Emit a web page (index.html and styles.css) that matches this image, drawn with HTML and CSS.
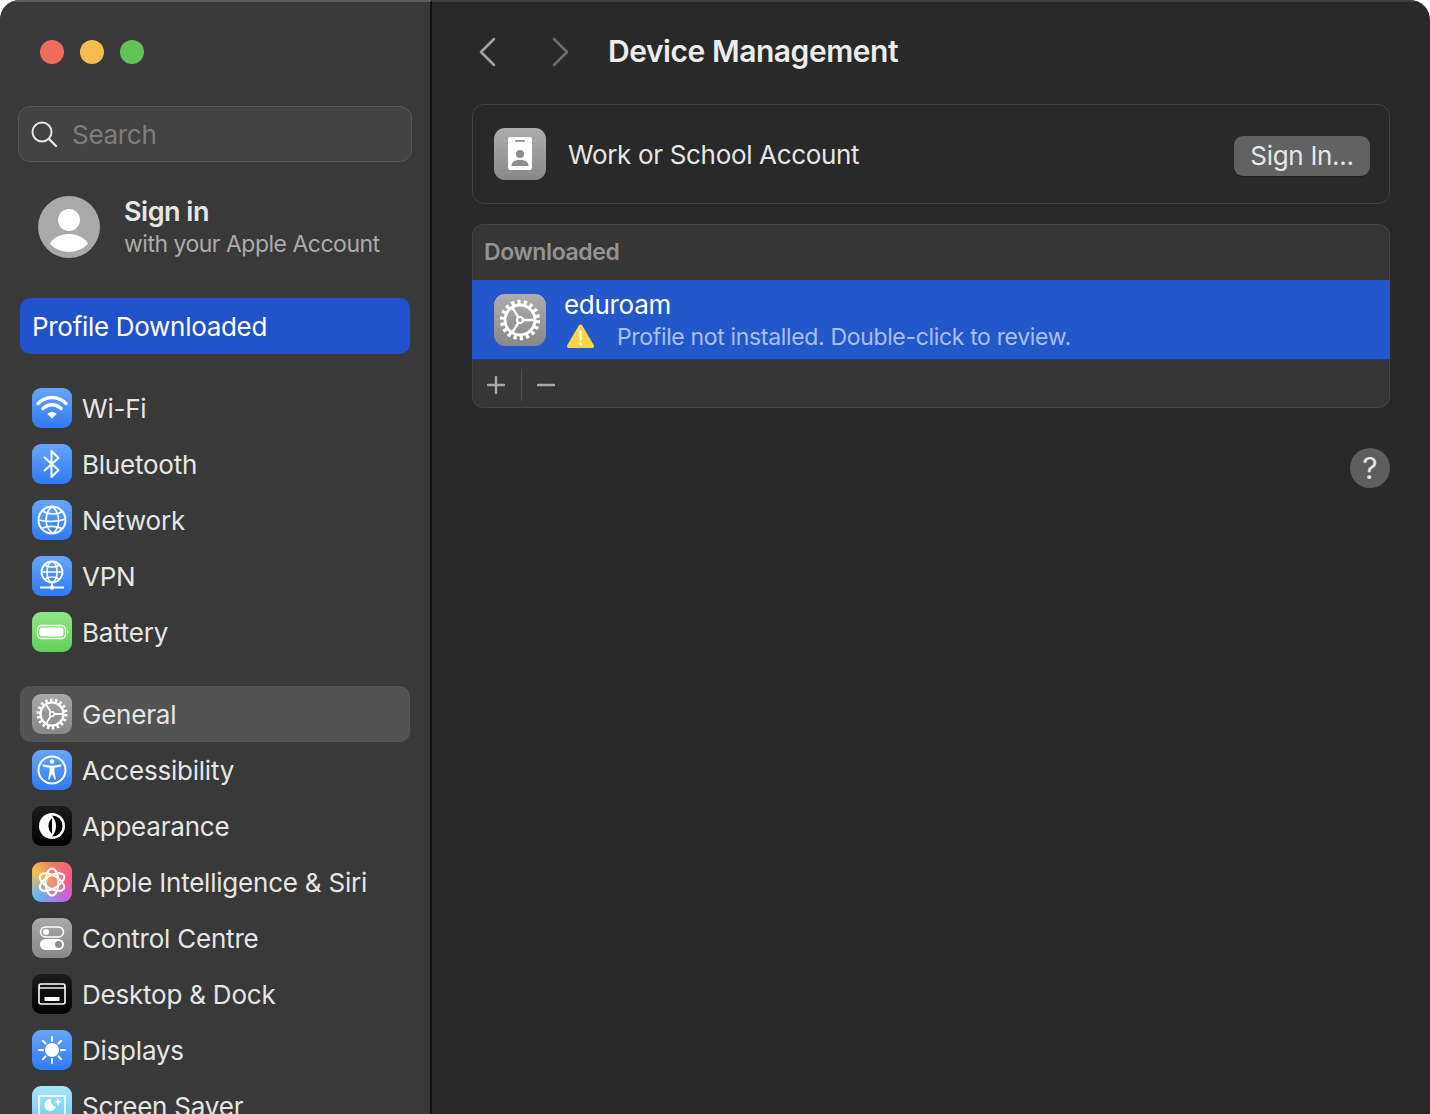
FILE: index.html
```html
<!DOCTYPE html>
<html>
<head>
    <title>Device Management</title>
    <link rel="stylesheet" href="styles.css">
</head>
<body>
    <svg class="defs" width="0" height="0">
        <symbol id="gear" viewBox="0 0 40 40">
            <circle cx="20" cy="20" r="13.800" fill="none" stroke="#fff" stroke-width="3.400" stroke-dasharray="2.410 2.410"/>
            <circle cx="20" cy="20" r="11.500" fill="none" stroke="#fff" stroke-width="2.200"/>
            <circle cx="20" cy="20" r="2.300" fill="none" stroke="#fff" stroke-width="1.500"/>
            <path d="M22 20H32M18.800 18L13.500 9.500M18.800 22L13.500 30.500" fill="none" stroke="#fff" stroke-width="1.800"/>
        </symbol>
    </svg>

    <div class="window">
        <aside class="sidebar">
            <div class="lights">
                <span class="light red"></span>
                <span class="light yellow"></span>
                <span class="light green"></span>
            </div>

            <div class="search">
                <svg class="search-icon" width="28" height="28" viewBox="0 0 28 28">
                    <circle cx="12" cy="12" r="9.500" fill="none" stroke="#e4e4e4" stroke-width="2"/>
                    <path d="M19 19L26 26" stroke="#e4e4e4" stroke-width="2.400" stroke-linecap="round"/>
                </svg>
                <span>Search</span>
            </div>

            <div class="account">
                <svg width="62" height="62" viewBox="0 0 62 62">
                    <defs><clipPath id="avatar-clip"><circle cx="31" cy="30" r="26"/></clipPath></defs>
                    <circle cx="31" cy="31" r="31" fill="#a9a9a9"/>
                    <circle cx="31" cy="24" r="11" fill="#fff"/>
                    <ellipse cx="31" cy="54" rx="21" ry="16" fill="#fff" clip-path="url(#avatar-clip)"/>
                </svg>
                <div class="account-text">
                    <div class="account-name">Sign in</div>
                    <div class="account-sub">with your Apple Account</div>
                </div>
            </div>

            <div class="profile-pill">Profile Downloaded</div>

            <ul class="nav nav-first">
                <li class="nav-row">
                    <span class="icon blue">
                        <svg viewBox="0 0 40 40" fill="none" stroke="#fff" stroke-linecap="round">
                            <path d="M6 15.500C14 7.500 26 7.500 34 15.500" stroke-width="3.400"/>
                            <path d="M11 20.500C16.500 15.500 23.500 15.500 29 20.500" stroke-width="3.400"/>
                            <path d="M16.500 26L20 29.500L23.500 26C21.500 24.300 18.500 24.300 16.500 26Z" fill="#fff" stroke-width="1.500"/>
                        </svg>
                    </span>
                    Wi-Fi
                </li>
                <li class="nav-row">
                    <span class="icon blue">
                        <svg viewBox="0 0 40 40" fill="none" stroke="#fff" stroke-width="2" stroke-linejoin="round" stroke-linecap="round">
                            <path d="M12.500 13.500L26.500 26L19.500 33V7L26.500 14L12.500 26.500"/>
                        </svg>
                    </span>
                    Bluetooth
                </li>
                <li class="nav-row">
                    <span class="icon blue">
                        <svg viewBox="0 0 40 40" fill="none" stroke="#fff" stroke-width="1.700">
                            <circle cx="20" cy="20" r="13.500" stroke-width="2"/>
                            <path d="M20 6.500C13 12 11 27 21 33.500M20 6.500C28 12 29 27 21 33.500"/>
                            <path d="M10 10.500C16 15 25 15 30.500 11.500M6.500 20C14 22 26 22 33.500 19M9.500 28.500C15 25.500 25 25.500 31 29"/>
                        </svg>
                    </span>
                    Network
                </li>
                <li class="nav-row">
                    <span class="icon blue">
                        <svg viewBox="0 0 40 40" fill="none" stroke="#fff" stroke-width="1.500">
                            <circle cx="20" cy="16" r="10.500" stroke-width="1.800"/>
                            <ellipse cx="20" cy="16" rx="5" ry="10.500"/>
                            <path d="M12.500 9C17 11.500 23 11.500 27.500 9M9.500 16H30.500M12.500 23C17 20.500 23 20.500 27.500 23"/>
                            <path d="M20 26.500V31M8 31.500H32" stroke-width="1.800"/>
                            <circle cx="20" cy="31.500" r="2.200" fill="#fff" stroke="none"/>
                        </svg>
                    </span>
                    VPN
                </li>
                <li class="nav-row">
                    <span class="icon green-tile">
                        <svg viewBox="0 0 40 40">
                            <rect x="5.500" y="13.500" width="28" height="13" rx="4" fill="none" stroke="#fff" stroke-width="1.400"/>
                            <rect x="7.500" y="15.500" width="24" height="9" rx="2.500" fill="#fff"/>
                            <path d="M35 18V22C36.200 21.500 36.200 18.500 35 18Z" fill="#fff"/>
                        </svg>
                    </span>
                    Battery
                </li>
            </ul>

            <ul class="nav">
                <li class="nav-row selected">
                    <span class="icon grey">
                        <svg viewBox="0 0 40 40"><use href="#gear"/></svg>
                    </span>
                    General
                </li>
                <li class="nav-row">
                    <span class="icon blue">
                        <svg viewBox="0 0 40 40" fill="none" stroke="#fff">
                            <circle cx="20" cy="20" r="13.500" stroke-width="2"/>
                            <circle cx="20" cy="11.500" r="2.200" fill="#fff" stroke="none"/>
                            <path d="M11.500 15.500C16 17 24 17 28.500 15.500" stroke-width="2" stroke-linecap="round"/>
                            <path d="M17.500 17H22.500V22L24 29.500H22.500L20 23.500L17.500 29.500H16L17.500 22Z" fill="#fff" stroke="none"/>
                        </svg>
                    </span>
                    Accessibility
                </li>
                <li class="nav-row">
                    <span class="icon black">
                        <svg viewBox="0 0 40 40">
                            <circle cx="20" cy="20" r="13" fill="#fff"/>
                            <path d="M20 9.500A10.500 10.500 0 0 1 20 30.500C23 27 24 23.500 24 20C24 16.500 23 13 20 9.500Z" fill="#000"/>
                            <path d="M20 12C17.500 14.500 16.500 17 16.500 20C16.500 23 17.500 25.500 20 28Z" fill="#000"/>
                        </svg>
                    </span>
                    Appearance
                </li>
                <li class="nav-row">
                    <span class="icon siri">
                        <svg viewBox="0 0 40 40" fill="none" stroke="#fff" stroke-width="2">
                            <ellipse cx="20" cy="20" rx="6.500" ry="13.500"/>
                            <ellipse cx="20" cy="20" rx="6.500" ry="13.500" transform="rotate(60 20 20)"/>
                            <ellipse cx="20" cy="20" rx="6.500" ry="13.500" transform="rotate(120 20 20)"/>
                        </svg>
                    </span>
                    Apple Intelligence &amp; Siri
                </li>
                <li class="nav-row">
                    <span class="icon grey">
                        <svg viewBox="0 0 40 40">
                            <rect x="8.500" y="9" width="23" height="10" rx="5" fill="none" stroke="#fff" stroke-width="1.500"/>
                            <circle cx="14" cy="14" r="3" fill="#fff"/>
                            <rect x="8" y="21" width="24" height="11" rx="5.500" fill="#fff"/>
                            <circle cx="26.500" cy="26.500" r="3.500" fill="#8d8d90"/>
                        </svg>
                    </span>
                    Control Centre
                </li>
                <li class="nav-row">
                    <span class="icon black">
                        <svg viewBox="0 0 40 40" fill="none" stroke="#fff">
                            <rect x="7" y="10" width="26" height="20" rx="2" stroke-width="1.600"/>
                            <path d="M7 14H33" stroke-width="1.400"/>
                            <rect x="12.500" y="23" width="15" height="4" fill="#fff" stroke="none"/>
                        </svg>
                    </span>
                    Desktop &amp; Dock
                </li>
                <li class="nav-row">
                    <span class="icon blue">
                        <svg viewBox="0 0 40 40">
                            <circle cx="20" cy="20" r="7" fill="#fff"/>
                            <path d="M20 7V11M20 29V33M7 20H11M29 20H33M10.800 10.800L13.600 13.600M26.400 26.400L29.200 29.200M10.800 29.200L13.600 26.400M26.400 13.600L29.200 10.800" stroke="#fff" stroke-width="2" stroke-linecap="round"/>
                        </svg>
                    </span>
                    Displays
                </li>
                <li class="nav-row">
                    <span class="icon sky">
                        <svg viewBox="0 0 40 40">
                            <rect x="7" y="10" width="26" height="20" fill="none" stroke="#fff" stroke-width="1.600"/>
                            <path d="M19 13A6 6 0 1 0 24 21A6.500 6.500 0 0 1 19 13Z" fill="#fff"/>
                            <path d="M26 12L27 15L30 16L27 17L26 20L25 17L22 16L25 15Z" fill="#fff"/>
                        </svg>
                    </span>
                    Screen Saver
                </li>
            </ul>
        </aside>

        <main class="content">
            <header class="toolbar">
                <svg class="chevron" width="18" height="30" viewBox="0 0 18 30" fill="none" stroke="#a2a2a2" stroke-width="2.600" stroke-linecap="round" stroke-linejoin="round">
                    <path d="M16 2L3 15L16 28"/>
                </svg>
                <svg class="chevron chevron-next" width="18" height="30" viewBox="0 0 18 30" fill="none" stroke="#6c6c6c" stroke-width="2.600" stroke-linecap="round" stroke-linejoin="round">
                    <path d="M2 2L15 15L2 28"/>
                </svg>
                <h1>Device Management</h1>
            </header>

            <section class="card account-card">
                <span class="tile">
                    <svg viewBox="0 0 52 52">
                        <rect x="14" y="9" width="24" height="33" rx="2" fill="#fff"/>
                        <rect x="21" y="12" width="10" height="1.800" rx="0.900" fill="#8e8e91"/>
                        <circle cx="26" cy="26" r="4" fill="#8e8e91"/>
                        <path d="M17.500 38C17.500 33.500 21 32 26 32C31 32 34.500 33.500 34.500 38Z" fill="#8e8e91"/>
                    </svg>
                </span>
                <span class="card-label">Work or School Account</span>
                <span class="button">Sign In...</span>
            </section>

            <section class="card list-card">
                <div class="list-head">Downloaded</div>
                <div class="list-row">
                    <span class="tile">
                        <svg viewBox="0 0 40 40"><use href="#gear"/></svg>
                    </span>
                    <div class="list-text">
                        <div class="list-title">eduroam</div>
                        <div class="list-status">
                            <svg width="30" height="30" viewBox="0 0 30 30">
                                <path d="M16.500 4.500L28 24H5Z" fill="#fdd645" stroke="#fdd645" stroke-width="4" stroke-linejoin="round"/>
                                <path d="M16.500 9.500V17.500" stroke="#fff" stroke-width="2.400" stroke-linecap="round"/>
                                <circle cx="16.500" cy="21.800" r="1.500" fill="#fff"/>
                            </svg>
                            <span>Profile not installed. Double-click to review.</span>
                        </div>
                    </div>
                </div>
                <div class="list-foot">
                    <svg class="foot-btn" width="18" height="18" viewBox="0 0 18 18">
                        <path d="M9 1V17M1 9H17" stroke="#a9a9a9" stroke-width="2.400" stroke-linecap="round"/>
                    </svg>
                    <span class="foot-divider"></span>
                    <svg class="foot-btn" width="18" height="18" viewBox="0 0 18 18">
                        <path d="M1 9H17" stroke="#a9a9a9" stroke-width="2.400" stroke-linecap="round"/>
                    </svg>
                </div>
            </section>

            <div class="help-row">
                <span class="help">?</span>
            </div>
        </main>
    </div>
</body>
</html>
```

FILE: styles.css
```css
* {
    box-sizing: border-box;
}
html, body {
    margin: 0;
    height: 100%;
    background: #fff;
}
body {
    font-family: Inter, "Liberation Sans", sans-serif;
    overflow: hidden;
}
.defs {
    position: absolute;
}
.window {
    display: flex;
    width: 1430px;
    height: 1114px;
    border-radius: 20px 20px 0 0;
    overflow: hidden;
    background: #292929;
    color: #e6e6e6;
}

/* sidebar */
.sidebar {
    width: 432px;
    flex: none;
    padding: 0 18px;
    background: #393939;
    border-right: 2px solid #111;
    border-top: 2px solid #5c5c5c;
}
.lights {
    display: flex;
    gap: 16px;
    padding: 38px 0 0 22px;
}
.light {
    width: 24px;
    height: 24px;
    border-radius: 50%;
}
.red { background: #ee6a5f; }
.yellow { background: #f5bd4f; }
.green { background: #61c454; }

.search {
    display: flex;
    align-items: center;
    height: 56px;
    margin-top: 42px;
    padding-left: 11px;
    background: #434343;
    border: 1px solid #585858;
    border-radius: 12px;
    font-size: 26px;
    letter-spacing: -0.3px;
    color: #7e7e7e;
}
.search-icon {
    margin-right: 14px;
}
.account {
    display: flex;
    align-items: center;
    gap: 24px;
    margin-top: 33px;
    padding-left: 20px;
}
.account svg {
    display: block;
}
.account-name {
    font-size: 27px;
    font-weight: 600;
    line-height: 34px;
    letter-spacing: -0.5px;
}
.account-sub {
    font-size: 23px;
    line-height: 30px;
    letter-spacing: -0.5px;
    color: #ababab;
}
.profile-pill {
    display: flex;
    align-items: center;
    height: 56px;
    margin: 39px 2px 0;
    padding-left: 12px;
    background: #2052cc;
    border-radius: 10px;
    font-size: 26px;
    letter-spacing: -0.3px;
    color: #fff;
}
.nav {
    list-style: none;
    margin: 26px 2px 0;
    padding: 0;
}
.nav-row {
    display: flex;
    align-items: center;
    gap: 10px;
    height: 56px;
    padding-left: 12px;
    border-radius: 10px;
    font-size: 26px;
    letter-spacing: -0.22px;
}
.selected {
    background: #535353;
}
.icon {
    flex: none;
    width: 40px;
    height: 40px;
    border-radius: 9px;
}
.icon svg {
    display: block;
    width: 40px;
    height: 40px;
}
.blue { background: linear-gradient(#66a5fb, #2f7bf6); }
.green-tile { background: linear-gradient(#93e68b, #5fd155); }
.grey { background: linear-gradient(#a9a9ac, #88888b); }
.black { background: linear-gradient(#1c1c1c, #000); }
.sky { background: linear-gradient(#a6e8fb, #6ec6ef); }
.siri {
    background:
        radial-gradient(circle at 50% 50%, #f59a63 0, rgba(245, 154, 99, 0) 60%),
        conic-gradient(#ef7a5f, #f0558f 90deg, #b96ae8 150deg, #63b6f2 225deg, #f3c14a 300deg, #ef7a5f);
}

/* main pane */
.content {
    flex: 1;
    min-width: 0;
    padding: 0 40px;
    border-top: 2px solid #3e3e3e;
}
.toolbar {
    display: flex;
    align-items: center;
    height: 102px;
    padding: 0 0 3px 6px;
}
.chevron-next {
    margin-left: 56px;
}
.toolbar h1 {
    margin: 0 0 2px 38px;
    font-size: 30px;
    font-weight: 600;
    line-height: 36px;
    letter-spacing: -0.45px;
    color: #ececec;
}
.card {
    border: 1px solid #444;
    border-radius: 12px;
}
.account-card {
    display: flex;
    align-items: center;
    height: 100px;
    padding: 0 19px 0 21px;
}
.tile {
    flex: none;
    width: 52px;
    height: 52px;
    border-radius: 11px;
    background: linear-gradient(#adadb0, #88888b);
}
.tile svg {
    display: block;
    width: 52px;
    height: 52px;
}
.card-label {
    flex: 1;
    margin-left: 22px;
    font-size: 26px;
    letter-spacing: -0.33px;
}
.button {
    display: flex;
    align-items: center;
    justify-content: center;
    width: 136px;
    height: 40px;
    margin-top: 4px;
    padding-bottom: 2px;
    background: #626262;
    border-radius: 9px;
    font-size: 26px;
    letter-spacing: -0.3px;
    box-shadow: 0 1px 1px rgba(0, 0, 0, 0.25);
}
.list-card {
    margin-top: 20px;
    background: #363636;
    border: none;
    box-shadow: inset 0 0 0 1px #444;
    overflow: hidden;
}
.list-head {
    height: 56px;
    padding: 14px 0 0 12px;
    font-size: 23px;
    font-weight: 600;
    line-height: 29px;
    letter-spacing: -0.4px;
    color: #939393;
}
.list-row {
    display: flex;
    align-items: center;
    height: 80px;
    padding-left: 22px;
    background: #2358cb;
    border-bottom: 1px solid #1a3f93;
}
.list-text {
    margin-left: 18px;
}
.list-title {
    font-size: 26px;
    line-height: 34px;
    letter-spacing: -0.3px;
    color: #fff;
}
.list-status {
    display: flex;
    align-items: center;
    gap: 23px;
    height: 30px;
    font-size: 23px;
    letter-spacing: -0.34px;
    color: #a9bfee;
}
.list-status svg {
    flex: none;
}
.list-foot {
    display: flex;
    align-items: center;
    height: 48px;
    padding: 2px 0 0 15px;
}
.foot-divider {
    width: 1px;
    height: 32px;
    margin: 0 15px 0 16px;
    background: #4f4f4f;
}
.help-row {
    display: flex;
    justify-content: flex-end;
    margin-top: 40px;
}
.help {
    display: flex;
    align-items: center;
    justify-content: center;
    width: 40px;
    height: 40px;
    border-radius: 50%;
    background: #5e5e5e;
    font-size: 30px;
    color: #e6e6e6;
}
```
